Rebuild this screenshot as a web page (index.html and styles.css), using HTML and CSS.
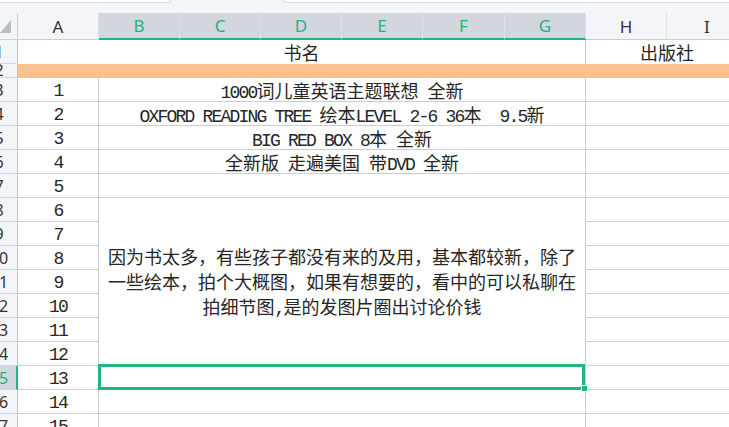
FILE: index.html
```html
<!DOCTYPE html>
<html lang="zh-CN">
<head>
    <meta charset="UTF-8">
    <title>书单</title>
    <link rel="stylesheet" href="styles.css">
</head>
<body>
    <div class="topbar">
        <div class="tab tab-left"></div>
        <div class="tab tab-right"></div>
    </div>

    <div class="colheads">
        <div class="corner"><span class="tri"></span></div>
        <div class="ch">A</div>
        <div class="ch sel">B</div>
        <div class="ch sel">C</div>
        <div class="ch sel">D</div>
        <div class="ch sel">E</div>
        <div class="ch sel wide">F</div>
        <div class="ch sel">G</div>
        <div class="ch">H</div>
        <div class="ch">I</div>
    </div>

    <div class="sheet">
        <!-- 表头 -->
        <div class="c rh"><span>1</span></div>
        <div class="c txt title">书名</div>
        <div class="c txt hi head">出版社</div>

        <div class="c rh short"><span>2</span></div>
        <div class="band"></div>

        <!-- 书目 -->
        <div class="c rh"><span>3</span></div>
        <div class="c num">1</div>
        <div class="c txt book"><span class="en">1000</span>词儿童英语主题联想<span class="en"> </span>全新</div>
        <div class="c hi"></div>

        <div class="c rh"><span>4</span></div>
        <div class="c num">2</div>
        <div class="c txt book"><span class="en">OXFORD READING TREE </span>绘本<span class="en">LEVEL 2-6 36</span>本<span class="en">  9.5</span>新</div>
        <div class="c hi"></div>

        <div class="c rh"><span>5</span></div>
        <div class="c num">3</div>
        <div class="c txt book"><span class="en">BIG RED BOX 8</span>本<span class="en"> </span>全新</div>
        <div class="c hi"></div>

        <div class="c rh"><span>6</span></div>
        <div class="c num">4</div>
        <div class="c txt book">全新版<span class="en"> </span>走遍美国<span class="en"> </span>带<span class="en">DVD </span>全新</div>
        <div class="c hi"></div>

        <div class="c rh"><span>7</span></div>
        <div class="c num">5</div>
        <div class="c book"></div>
        <div class="c hi"></div>

        <!-- 合并的说明 -->
        <div class="c rh"><span>8</span></div>
        <div class="c num">6</div>
        <div class="c note">
            <p class="msg">因为书太多，有些孩子都没有来的及用，基本都较新，除了一些绘本，拍个大概图，如果有想要的，看中的可以私聊在拍细节图<span class="en">,</span>是的发图片圈出讨论价钱</p>
        </div>
        <div class="c hi"></div>

        <div class="c rh"><span>9</span></div>
        <div class="c num">7</div>
        <div class="c hi"></div>

        <div class="c rh"><span>10</span></div>
        <div class="c num">8</div>
        <div class="c hi"></div>

        <div class="c rh"><span>11</span></div>
        <div class="c num">9</div>
        <div class="c hi"></div>

        <div class="c rh"><span>12</span></div>
        <div class="c num">10</div>
        <div class="c hi"></div>

        <div class="c rh"><span>13</span></div>
        <div class="c num">11</div>
        <div class="c hi"></div>

        <div class="c rh"><span>14</span></div>
        <div class="c num">12</div>
        <div class="c hi"></div>

        <div class="c rh cur"><span>15</span></div>
        <div class="c num">13</div>
        <div class="c book active"></div>
        <div class="c hi"></div>

        <div class="c rh"><span>16</span></div>
        <div class="c num">14</div>
        <div class="c book"></div>
        <div class="c hi"></div>

        <div class="c rh"><span>17</span></div>
        <div class="c num">15</div>
        <div class="c book"></div>
        <div class="c hi"></div>
    </div>
</body>
</html>
```

FILE: styles.css
```css
/* 基本 */
body {
    margin: 0;
    width: 729px;
    height: 427px;
    overflow: hidden;
    background: #fff;
    font-family: "Noto Sans", sans-serif;
}

/* 顶部条 */
.topbar {
    display: flex;
    gap: 112px;
    align-items: flex-start;
    height: 13px;
    background: #f3f5f8;
}

.tab {
    height: 2px;
    background: #fff;
    border: 1px solid #d5d9e0;
    border-top: 0;
}

.tab-left {
    width: 170px;
    border-left: 0;
    border-radius: 0 0 4px 0;
}

.tab-right {
    flex: 1;
    border-right: 0;
    border-radius: 0 0 0 4px;
}

/* 列标题 */
.colheads {
    display: flex;
    width: 767px;
    height: 27px;
    background: #f3f5f8;
}

.corner {
    box-sizing: border-box;
    width: 18px;
    display: flex;
    justify-content: flex-end;
    align-items: flex-end;
    padding: 0 6px 6px 0;
    border-right: 1px solid #c9ced8;
    border-bottom: 1px solid #c9ced8;
}

.tri {
    width: 11px;
    height: 13px;
    background: #b9bdc5;
    clip-path: polygon(100% 0, 100% 100%, 0 100%);
}

.ch {
    box-sizing: border-box;
    width: 81px;
    display: flex;
    align-items: center;
    justify-content: center;
    border-right: 1px solid #dcdfe5;
    border-bottom: 1px solid #c9ced8;
    font-size: 17px;
    color: #333;
}

.ch.sel {
    background: #d3d6dc;
    color: #1fb27a;
    border-right-color: #dfe1e6;
    border-bottom: 2px solid #1fb77b;
}

.ch.wide {
    width: 82px;
}

/* 表格 */
.sheet {
    display: grid;
    grid-template-columns: 18px 81px 487px 162px;
    grid-template-rows: 24px 14px;
    grid-auto-rows: 24px;
    font-family: "Noto Sans CJK SC", sans-serif;
    font-size: 18px;
    color: #262626;
}

.c {
    box-sizing: border-box;
    display: flex;
    align-items: center;
    justify-content: center;
    padding-top: 2px;
    white-space: nowrap;
    border-right: 1px solid #c8cdd7;
    border-bottom: 1px solid #c8cdd7;
}

.c.txt {
    display: block;
    padding-top: 0;
    text-align: center;
    line-height: 24px;
}

.rh {
    grid-column: 1;
    justify-content: flex-start;
    overflow: hidden;
    padding-top: 0;
    background: #f3f5f8;
    border-right-color: #bfc4ce;
    border-bottom-color: #d3d7df;
    font-family: "Noto Sans", sans-serif;
    font-size: 16px;
    color: #333;
}

.rh.short {
    line-height: 13px;
}

.rh span {
    flex: none;
    width: 34px;
    margin-left: -18px;
    text-align: center;
}

.rh.cur {
    background: #d3d6dc;
    color: #1fb27a;
    border-right: 2px solid #1fb77b;
}

.title {
    grid-column: 2 / 4;
    border-bottom: 0;
}

.head {
    border-bottom: 0;
}

.band {
    grid-column: 2 / -1;
    background: #f8c18f;
}

.num {
    grid-column: 2;
}

.num,
.en {
    font-family: "Liberation Mono", monospace;
    font-size: 18px;
    letter-spacing: -1.8px;
    white-space: pre;
}

.book {
    grid-column: 3;
}

.hi {
    grid-column: 4;
    border-right: 0;
}

.note {
    grid-column: 3;
    grid-row: span 7;
    padding: 3px 4px 0;
    white-space: normal;
}

.msg {
    margin: 0;
    text-align: center;
    line-height: 25px;
}

/* 当前单元格 */
.active {
    position: relative;
}

.active::after {
    content: "";
    position: absolute;
    top: -2px;
    left: -1px;
    right: 0;
    bottom: -1px;
    border: 3px solid #1fb77b;
}

.active::before {
    content: "";
    position: absolute;
    right: -3px;
    bottom: -3px;
    width: 5px;
    height: 5px;
    background: #1fb77b;
    border: 1px solid #fff;
    z-index: 1;
}
```
